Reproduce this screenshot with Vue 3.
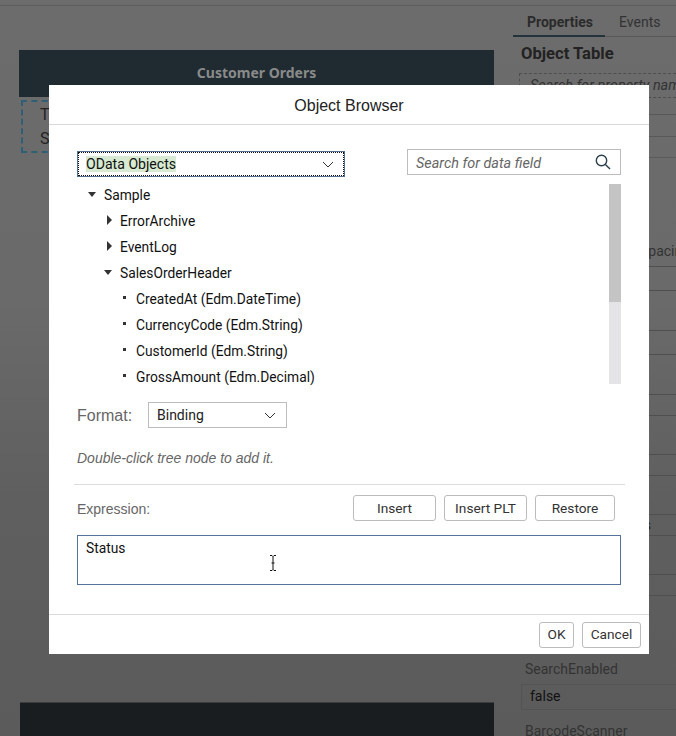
<script setup>
const tree = [
  { label: 'Sample', level: 0, kind: 'open' },
  { label: 'ErrorArchive', level: 1, kind: 'closed' },
  { label: 'EventLog', level: 1, kind: 'closed' },
  { label: 'SalesOrderHeader', level: 1, kind: 'open' },
  { label: 'CreatedAt (Edm.DateTime)', level: 2, kind: 'leaf' },
  { label: 'CurrencyCode (Edm.String)', level: 2, kind: 'leaf' },
  { label: 'CustomerId (Edm.String)', level: 2, kind: 'leaf' },
  { label: 'GrossAmount (Edm.Decimal)', level: 2, kind: 'leaf' }
]
const fieldsets = [
  { cls: 'g64', label: '' },
  { cls: 'g64', label: '' },
  { cls: 'g60', label: '' },
  { cls: 'g60', label: '' },
  { cls: 'g60', label: 'Items' },
  { cls: 'g60', label: '' }
]
</script>

<template>
  <div class="page">
    <div class="topline"></div>
    <div class="workspace">
      <main class="canvas">
        <div class="card-head">Customer Orders</div>
        <div class="dashed">T<br />S</div>
        <div class="canvas-fill"></div>
        <div class="card-foot"></div>
      </main>
      <aside class="side">
        <div class="tabs">
          <span class="tab active">Properties</span>
          <span class="tab">Events</span>
        </div>
        <h2 class="side-title">Object Table</h2>
        <div class="side-search">Search for property name</div>
        <div class="side-rule r1"></div>
        <div class="side-rule r2"></div>
        <div class="side-rule r3"></div>
        <div class="side-label spacing">Spacing</div>
        <div class="side-fields">
          <div v-for="(f, i) in fieldsets" :key="i" class="side-field" :class="f.cls">
            <span v-if="f.label" class="field-label">{{ f.label }}</span>
          </div>
        </div>
        <div class="side-label search-en">SearchEnabled</div>
        <div class="side-input">false</div>
        <div class="side-label barcode">BarcodeScanner</div>
      </aside>
    </div>

    <section class="dialog">
      <header class="dlg-head">Object Browser</header>
      <div class="dlg-body">
        <div class="top-row">
          <div class="odata">
            <span class="odata-inner">
              <span class="odata-text">OData Objects</span>
              <svg class="chev" width="12" height="7" viewBox="0 0 12 7"><path d="M1 1l5 5 5-5" /></svg>
            </span>
          </div>
          <div class="search">
            <span class="search-text">Search for data field</span>
            <svg width="16" height="16" viewBox="0 0 16 16" class="lens"><circle cx="6.5" cy="6.5" r="5.2" /><path d="M10.4 10.4L15 15" /></svg>
          </div>
        </div>

        <div class="tree-wrap">
          <ul class="tree">
            <li v-for="n in tree" :key="n.label" class="node" :class="'lv' + n.level">
              <i class="mark" :class="n.kind"></i>
              <span>{{ n.label }}</span>
            </li>
          </ul>
          <div class="scroll"><div class="thumb"></div></div>
        </div>

        <div class="format-row">
          <label class="format-label">Format:</label>
          <div class="format-select">
            <span>Binding</span>
            <svg width="12" height="7" viewBox="0 0 12 7" class="chev"><path d="M1 1l5 5 5-5" /></svg>
          </div>
        </div>
        <p class="hint">Double-click tree node to add it.</p>
        <div class="rule"></div>

        <div class="expr-row">
          <span class="expr-label">Expression:</span>
          <div class="expr-btns">
            <button class="btn w-insert">Insert</button>
            <button class="btn w-insert">Insert PLT</button>
            <button class="btn w-restore">Restore</button>
          </div>
        </div>
        <div class="expr-box">
          Status
          <svg class="ibeam" width="8" height="16" viewBox="0 0 8 16"><path d="M1 .5h2l1 1 1-1h2M4 1.5v13M1 15.5h2l1-1 1 1h2M2.5 8h3" /></svg>
        </div>
      </div>
      <footer class="dlg-foot">
        <button class="btn ok">OK</button>
        <button class="btn cancel">Cancel</button>
      </footer>
    </section>
  </div>
</template>

<style>
html, body { margin: 0; padding: 0; background: #666; }
</style>

<style scoped>
* { box-sizing: border-box; }
.page {
  position: relative;
  width: 676px;
  height: 736px;
  overflow: hidden;
  background: linear-gradient(#6c6c6c 0, #6a6a6a 300px, #5f5f5f 500px, #5b5b5b 100%);
  font-family: Roboto, sans-serif;
  color: #1f1f1f;
}
.topline { height: 6px; border-bottom: 1px solid #5e5e5e; }
.workspace { display: flex; height: 730px; }
.canvas {
  width: 513px;
  padding: 44px 19px 0;
  display: flex;
  flex-direction: column;
  flex: none;
}
.card-head {
  height: 47px;
  background: #1f2a31;
  color: #8a8a8a;
  font: 700 14px/46px "Noto Sans", sans-serif;
  text-align: center;
  flex: none;
}
.dashed {
  margin: 3px 0 0 2px;
  width: 120px;
  height: 53px;
  border: 2px dashed #2f5f74;
  padding: 1px 17px;
  font: 16px/24px Roboto, sans-serif;
  color: #222;
  flex: none;
}
.canvas-fill { flex: 1; }
.card-foot {
  height: 34px;
  margin-left: 1px;
  background: #1a1d20;
  border-top: 1px solid #3a3d40;
  flex: none;
}
.side { flex: 1; min-width: 0; position: relative; white-space: nowrap; }
.tabs {
  height: 31px;
  display: flex;
  border-bottom: 1px solid #585858;
  font-size: 14px;
  line-height: 32px;
}
.tab { color: #333; padding: 0 13px 0 14px; position: relative; }
.tab.active {
  width: 92px;
  font-weight: 700;
  color: #2b2b2b;
}
.tab.active::after {
  content: "";
  position: absolute;
  left: 0;
  right: 0;
  bottom: -1px;
  height: 2px;
  background: #24323c;
}
.side-title {
  margin: 5px 0 0 8px;
  font: 700 16.6px/24px Roboto, sans-serif;
  color: #222;
}
.side-search {
  margin: 7px 0 0 6px;
  height: 25px;
  padding-left: 10px;
  border: 1px dashed #4e4e4e;
  border-right: 0;
  font: italic 14.4px/24px Roboto, sans-serif;
  color: #333;
}
.side-rule { height: 1px; margin-top: 16px; background: #585858; }
.side-rule.r2 { margin-top: 21px; }
.side-rule.r3 { margin-top: 20px; background: #5b5b5b; }
.side-label { margin-left: 12px; font-size: 14px; line-height: 19px; color: #333; }
.side-label.spacing { margin-top: 84px; margin-left: 127px; height: 19px; }
.side-fields { margin-top: 5px; }
.side-field {
  height: 25px;
  border-top: 1px solid #4f4f4f;
  border-bottom: 1px solid #4f4f4f;
  margin-left: 6px;
  display: flex;
  justify-content: flex-end;
}
.side-field.g64 { margin-bottom: 39px; }
.side-field.g60 { height: 22px; margin-bottom: 38px; }
.field-label {
  margin-right: 25px;
  font-size: 14px;
  line-height: 20px;
  color: #222;
}
.side-label.search-en { margin-top: 64px; height: 19px; }
.side-input {
  margin: 5px 0 0 8px;
  height: 26px;
  padding-left: 8px;
  border: 1px solid #545454;
  border-right: 0;
  font-size: 14px;
  line-height: 23px;
  color: #111;
}
.side-label.barcode { margin-top: 12px; }

.dialog {
  position: absolute;
  left: 49px;
  top: 85px;
  width: 600px;
  height: 569px;
  background: #fff;
  display: flex;
  flex-direction: column;
}
.dlg-head {
  height: 40px;
  border-bottom: 1px solid #d9d9d9;
  text-align: center;
  font: 16px/41px "Liberation Sans", sans-serif;
  color: #222;
  flex: none;
}
.dlg-body { flex: 1; padding: 24px 28px 0; }
.top-row { display: flex; justify-content: space-between; align-items: flex-start; }
.odata {
  width: 268px;
  height: 26px;
  margin-top: 2px;
  border: 1px solid #54708f;
}
.odata-inner {
  height: 100%;
  display: flex;
  align-items: center;
  justify-content: space-between;
  border: 1px dotted #111;
  padding: 0 9px 0 7px;
}
.odata-text {
  background: #d8ebd2;
  font-size: 14.1px;
  line-height: 16px;
  color: #111;
}
.chev { fill: none; stroke: #333; stroke-width: 1; flex: none; }
.search {
  width: 214px;
  height: 26px;
  border: 1px solid #bdbdbd;
  display: flex;
  align-items: center;
  justify-content: space-between;
  padding: 0 9px 0 8px;
  font-style: italic;
  font-size: 14.4px;
  color: #666;
}
.search-text { padding-top: 2px; }
.lens { fill: none; stroke: #2a3f4d; stroke-width: 1.4; }
.tree-wrap {
  position: relative;
  height: 201px;
  margin-top: 7px;
  overflow: hidden;
}
.tree { list-style: none; margin: -2px 0 0; padding: 0; }
.node {
  height: 26px;
  display: flex;
  align-items: center;
  font-size: 13.8px;
  color: #111;
  position: relative;
}
.lv0 { padding-left: 27px; }
.lv1 { padding-left: 43px; }
.lv2 { padding-left: 59px; }
.mark { position: absolute; width: 0; height: 0; }
.lv0 .mark { left: 11px; }
.lv1 .mark { left: 30px; }
.lv1 .mark.open { left: 27px; }
.lv2 .mark { left: 46px; }
.mark.open {
  border-left: 4.5px solid transparent;
  border-right: 4.5px solid transparent;
  border-top: 5px solid #333;
  margin-top: -2px;
}
.mark.closed {
  border-top: 5px solid transparent;
  border-bottom: 5px solid transparent;
  border-left: 5px solid #333;
  margin-top: -2px;
}
.mark.leaf {
  width: 3px;
  height: 3px;
  background: #333;
  margin-top: -3px;
}
.scroll {
  position: absolute;
  right: 0;
  top: 0;
  width: 12px;
  height: 200px;
  background: #e4e4e6;
}
.thumb { height: 118px; background: #c4c4c4; }
.format-row { display: flex; align-items: center; margin-top: 17px; height: 26px; }
.format-label {
  width: 71px;
  padding-top: 2px;
  font: 16px "Liberation Sans", sans-serif;
  color: #666;
  flex: none;
}
.format-select {
  width: 139px;
  height: 26px;
  border: 1px solid #bdbdbd;
  display: flex;
  align-items: center;
  justify-content: space-between;
  padding: 0 10px 0 8px;
  font-size: 14px;
  color: #222;
}
.hint {
  margin: 21px 0 0;
  font: italic 14px/18px "Liberation Sans", sans-serif;
  color: #666;
}
.rule {
  height: 1px;
  margin: 17px -4px 0 -3px;
  background: #dcdcdc;
}
.expr-row {
  display: flex;
  justify-content: space-between;
  align-items: center;
  margin-top: 10px;
  height: 26px;
}
.expr-label { padding-top: 2px; font: 14px "Liberation Sans", sans-serif; color: #666; }
.expr-btns { display: flex; gap: 8px; margin-right: 6px; }
.btn {
  height: 26px;
  border: 1px solid #bcbcbc;
  border-radius: 3px;
  background: #fff;
  font: 13.7px Roboto, sans-serif;
  color: #333;
  padding: 0 0 1px;
}
.w-insert { width: 83px; }
.w-restore { width: 80px; }
.expr-box {
  position: relative;
  height: 50px;
  margin-top: 14px;
  border: 1px solid #56749b;
  padding: 3px 8px;
  font-size: 13.8px;
  line-height: 18px;
  color: #111;
}
.ibeam {
  position: absolute;
  left: 191px;
  top: 19px;
  fill: none;
  stroke: #111;
  stroke-width: 1;
}
.dlg-foot {
  height: 40px;
  border-top: 1px solid #dcdcdc;
  display: flex;
  justify-content: flex-end;
  align-items: center;
  gap: 8px;
  padding: 0 8px;
  flex: none;
}
.ok { width: 35px; }
.cancel { width: 59px; }
</style>
